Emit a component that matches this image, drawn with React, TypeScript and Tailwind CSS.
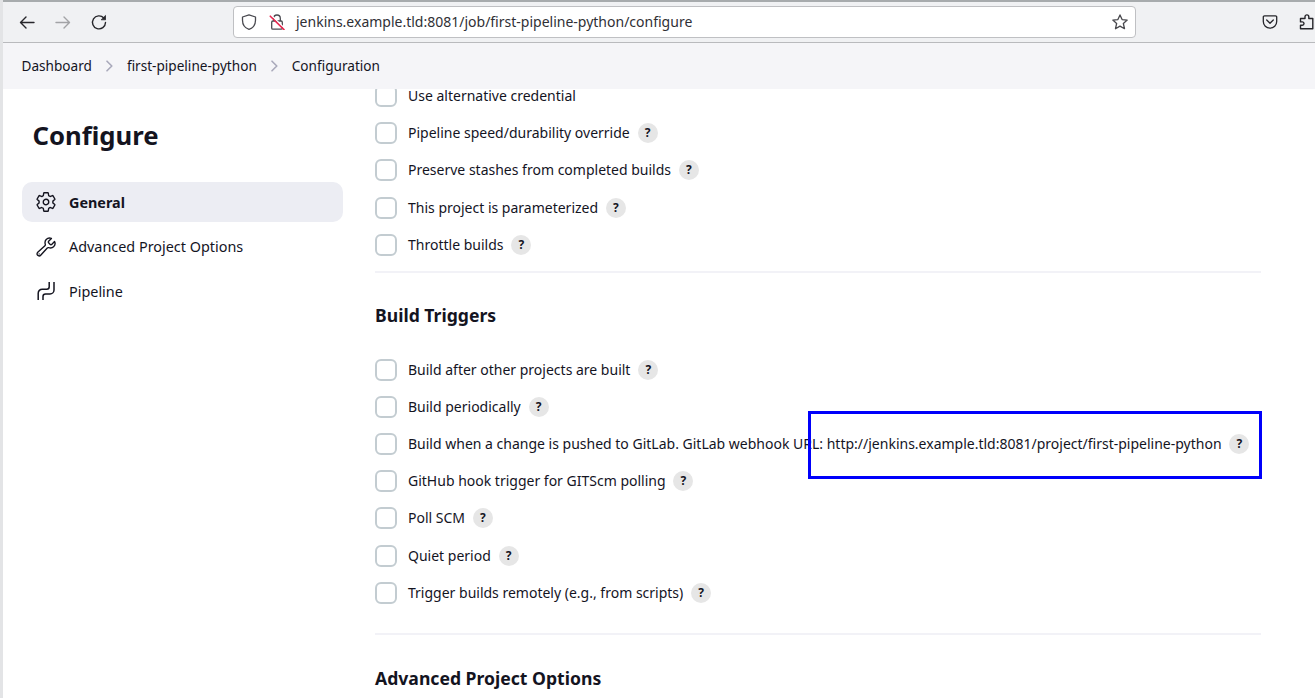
import type { ReactNode } from "react";
import { IoSettingsOutline, IoBuildOutline } from "react-icons/io5";

const generalOptions = [
  { label: "Use alternative credential", help: false },
  { label: "Pipeline speed/durability override", help: true },
  { label: "Preserve stashes from completed builds", help: true },
  { label: "This project is parameterized", help: true },
  { label: "Throttle builds", help: true },
];

const triggerOptions = [
  { label: "Build after other projects are built", help: true },
  { label: "Build periodically", help: true },
  {
    label:
      "Build when a change is pushed to GitLab. GitLab webhook URL: http://jenkins.example.tld:8081/project/first-pipeline-python",
    help: true,
    highlight: true,
  },
  { label: "GitHub hook trigger for GITScm polling", help: true },
  { label: "Poll SCM", help: true },
  { label: "Quiet period", help: true },
  { label: "Trigger builds remotely (e.g., from scripts)", help: true },
];

function Option({ label, help, highlight }: { label: string; help: boolean; highlight?: boolean }) {
  return (
    <div className="relative flex h-[37.2px] items-center whitespace-nowrap">
      <span className="size-[22px] shrink-0 rounded-[6px] border-2 border-[#c3ccd1] bg-white" />
      <span className="ml-[11px] leading-5">{label}</span>
      {help && (
        <span className="ml-[7.850px] flex size-5 items-center justify-center rounded-full bg-[#e6e6e6] text-[12px] leading-5 font-bold">
          ?
        </span>
      )}
      {highlight && (
        <span className="absolute top-[-15px] left-[433.400px] h-[68px] w-[454px] border-3 border-[#0000fb]" />
      )}
    </div>
  );
}

function NavItem({ icon, label, active }: { icon: ReactNode; label: string; active?: boolean }) {
  return (
    <div
      className={
        active
          ? "flex h-10 items-center rounded-[10px] bg-[#ecedf3] pl-[13px] font-bold"
          : "flex h-10 items-center rounded-[10px] pl-[13px]"
      }
    >
      {icon}
      <span className="ml-3 pt-px text-[14.400px] leading-5">{label}</span>
    </div>
  );
}

function Chevron() {
  return (
    <svg className="mx-[14px] h-3 w-[7px]" viewBox="0 0 7 12" fill="none" stroke="#a9a9bb" strokeWidth="1.600" strokeLinecap="round" strokeLinejoin="round">
      <path d="M1 1.200 5.800 6 1 10.800" />
    </svg>
  );
}

function Toolbar() {
  return (
    <header className="flex h-[43px] shrink-0 items-center border-t-2 border-b border-t-[#a7abad] border-b-[#b9babd] bg-[#f0f1f3] pl-[13px] text-[#26262b]">
      <svg className="size-[22px] shrink-0" viewBox="0 0 22 22" fill="none" stroke="currentColor" strokeWidth="1.400" strokeLinecap="round" strokeLinejoin="round">
        <path d="M18 11.500H4.500M10 6 4.500 11.500l5.500 5.500" />
      </svg>
      <svg className="ml-[14px] size-[22px] shrink-0 text-[#a2a3a6]" viewBox="0 0 22 22" fill="none" stroke="currentColor" strokeWidth="1.400" strokeLinecap="round" strokeLinejoin="round">
        <path d="M4 11.500h13.500M12 6 17.500 11.500 12 17" />
      </svg>
      <svg className="ml-[14px] size-[22px] shrink-0" viewBox="0 0 22 22" fill="none" stroke="currentColor" strokeWidth="1.400" strokeLinecap="round">
        <path d="M15.800 7A6.500 6.500 0 1 0 17.500 11.500" />
        <path d="M17.500 4.800v4h-4z" fill="currentColor" strokeWidth=".8" strokeLinejoin="round" />
      </svg>
      <div className="ml-[123px] flex h-8 w-[903px] shrink-0 items-center rounded-[4px] border border-[#bfc0c3] bg-white pl-[7px] pr-[7px]">
        <svg className="size-4" viewBox="0 0 16 16" fill="none" stroke="#4a4a50" strokeWidth="1.300" strokeLinejoin="round">
          <path d="M8 .8 14.500 3v3.200C14.500 10.800 11.800 14 8 15.300 4.200 14 1.500 10.800 1.500 6.200V3z" />
        </svg>
        <svg className="ml-3 size-4" viewBox="0 0 16 16" fill="none" stroke="#4a4a50" strokeWidth="1.300">
          <path d="M4.700 7V4.300a3.300 3.300 0 0 1 6.600 0V7" />
          <rect x="2.700" y="7" width="10.600" height="8.200" rx="1.200" />
          <path d="M2.300 1.200 15.500 14.200" stroke="white" strokeWidth="1.500" />
          <path d="M1.300 2.200 15 15.600" stroke="#e8274f" strokeWidth="1.600" strokeLinecap="round" />
        </svg>
        <span className="ml-[11px] flex-1 pb-0.5 text-[14px] text-[#303035]">jenkins.example.tld:8081/job/first-pipeline-python/configure</span>
        <svg className="size-4" viewBox="0 0 16 16" fill="none" stroke="#48484d" strokeWidth="1.300" strokeLinejoin="round">
          <path d="m8 .9 2.100 4.700 5.100.5-3.850 3.400 1.150 5.200L8 12.100l-4.500 2.600 1.150-5.200L.8 6.100l5.100-.5z" />
        </svg>
      </div>
      <svg className="ml-[126px] size-4 shrink-0" viewBox="0 0 16 16" fill="none" stroke="currentColor" strokeWidth="1.300" strokeLinecap="round" strokeLinejoin="round">
        <path d="M2.500 1.900h11a1.200 1.200 0 0 1 1.200 1.200v4.400a6.700 6.700 0 0 1-13.400 0V3.100a1.200 1.200 0 0 1 1.200-1.200zM4.700 6 8 9.200 11.300 6" />
      </svg>
      <svg className="ml-[21px] size-4 shrink-0" viewBox="0 0 16 16" fill="none" stroke="currentColor" strokeWidth="1.400" strokeLinejoin="round">
        <path d="M1.500 14.800v-3.500h1.800a1.700 1.700 0 0 0 0-3.400H1.500V4.500h4.500V2.800a1.900 1.900 0 0 1 3.800 0v1.700h4v10.300z" />
      </svg>
    </header>
  );
}

export default function App() {
  return (
    <div className="flex h-[698px] w-[1315px] overflow-hidden bg-white font-['Noto_Sans',sans-serif] text-[14px] text-[#14141f]">
      <div className="w-[3px] shrink-0 bg-[#e3e4e6]" />
      <div className="flex min-w-0 flex-1 flex-col overflow-hidden">
        <Toolbar />
        <nav className="flex h-[46px] shrink-0 items-center bg-[#f5f5f8] pl-[18.500px] text-[13.600px] leading-5">
          <span>Dashboard</span>
          <Chevron />
          <span>first-pipeline-python</span>
          <Chevron />
          <span>Configuration</span>
        </nav>
        <div className="flex min-h-0 flex-1 overflow-hidden">
          <aside className="w-[340px] shrink-0 pl-[19px] pt-[29px]">
            <h1 className="pl-[10.500px] text-[25.700px] leading-9 font-bold">Configure</h1>
            <div className="mt-7 flex w-[321px] flex-col gap-[4.600px]">
              <NavItem active label="General" icon={<IoSettingsOutline className="size-[22px]" />} />
              <NavItem label="Advanced Project Options" icon={<IoBuildOutline className="size-[22px]" />} />
              <NavItem
                label="Pipeline"
                icon={
                  <svg className="size-[22px]" viewBox="0 0 22 22" fill="none" stroke="currentColor" strokeWidth="1.500">
                    <path d="M3.200 20v-6.800a4 4 0 0 1 4-4h4.500a2.500 2.500 0 0 0 2.500-2.500V2M8 20v-3.500a2.500 2.500 0 0 1 2.500-2.500h4.500a4 4 0 0 0 4-4V2" />
                  </svg>
                }
              />
            </div>
          </aside>
          <main className="ml-8 w-[886px] shrink-0">
            <div className="mt-[-11.600px]">
              {generalOptions.map((o) => (
                <Option key={o.label} {...o} />
              ))}
            </div>
            <hr className="mt-[7.600px] border-t-2 border-[#f2f2f7]" />
            <h2 className="mt-[30px] text-[17.600px] leading-6 font-bold">Build Triggers</h2>
            <div className="mt-[24.200px]">
              {triggerOptions.map((o) => (
                <Option key={o.label} {...o} />
              ))}
            </div>
            <hr className="mt-[21.400px] border-t-2 border-[#f2f2f7]" />
            <h2 className="mt-[31px] text-[17.600px] leading-6 font-bold">Advanced Project Options</h2>
          </main>
        </div>
      </div>
    </div>
  );
}
